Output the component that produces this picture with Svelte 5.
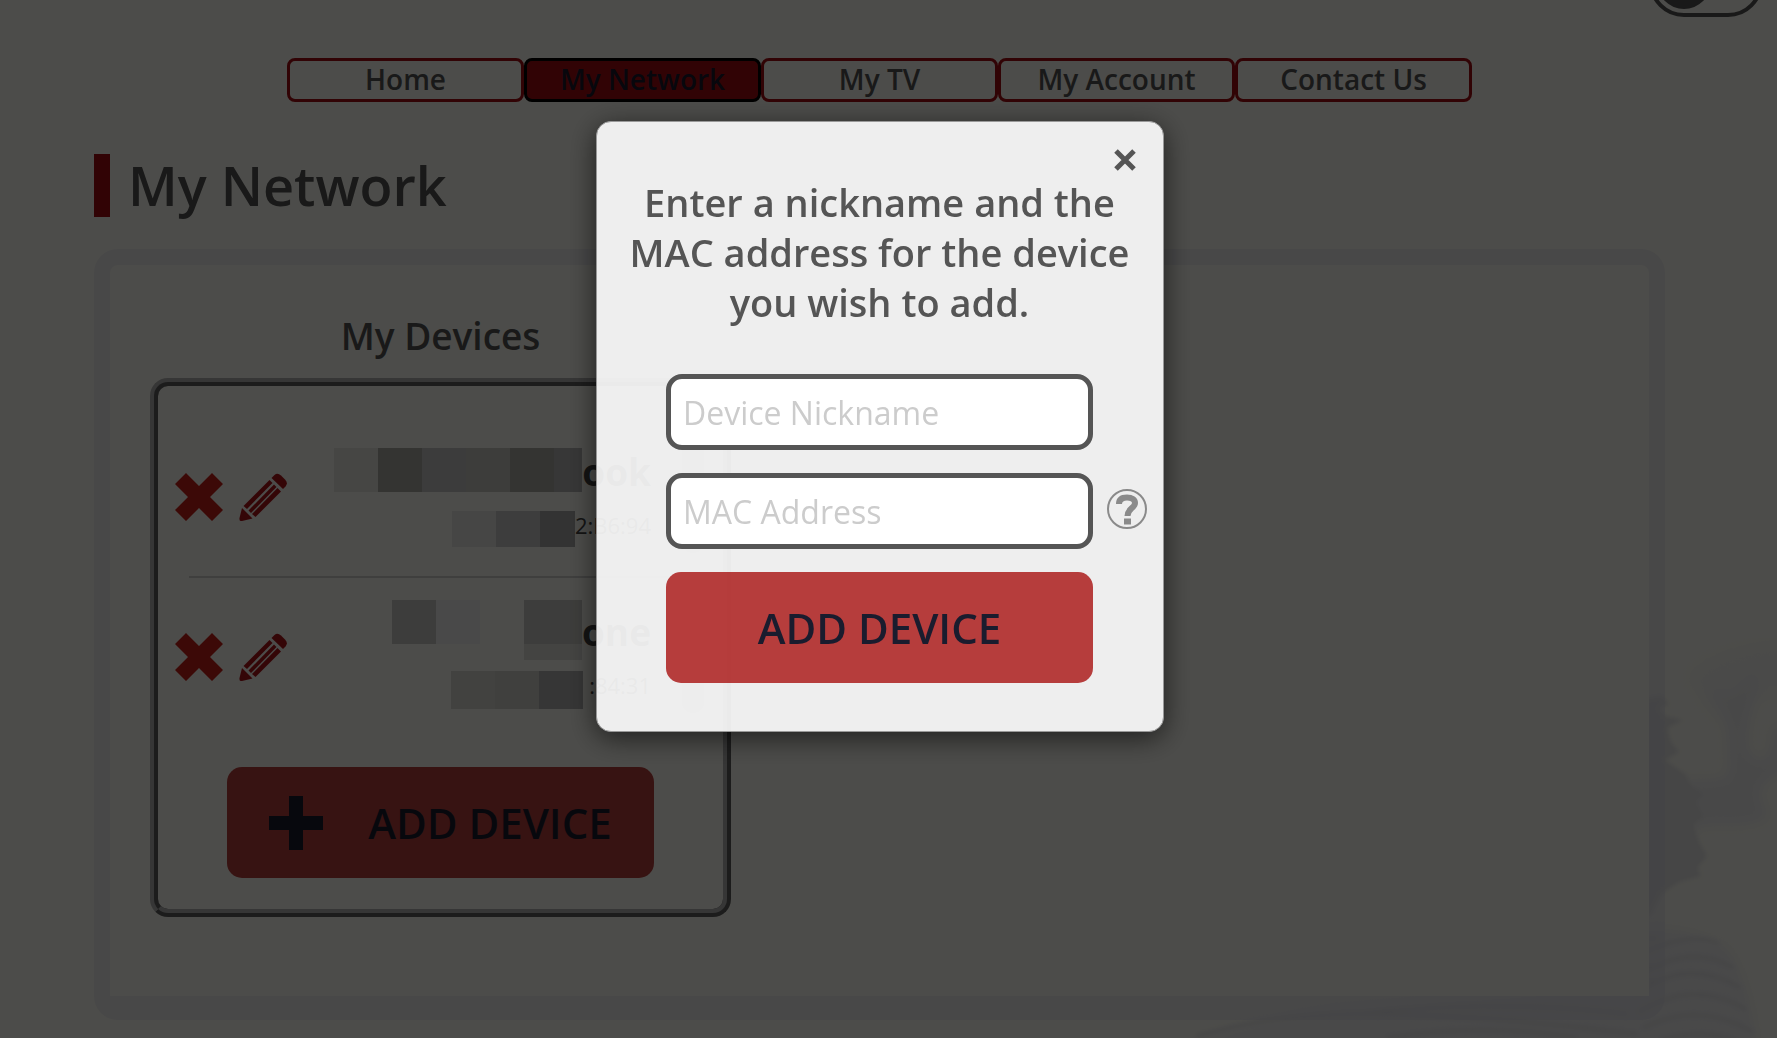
<script>
  const tabs = ['Home', 'My Network', 'My TV', 'My Account', 'Contact Us'];

  const devices = [
    {
      nameTail: 'ook',
      nameGap: 0,
      nameTiles: [
        { w: 44, h: 44, c: '#ecece5' },
        { w: 44, h: 44, c: '#b0b0a9' },
        { w: 44, h: 44, c: '#c8c8c8' },
        { w: 44, h: 44, c: '#cbcbc7' },
        { w: 44, h: 44, c: '#b0b0a9' },
        { w: 28, h: 44, c: '#b8b8b8' }
      ],
      macTail: '2:B6:94',
      macGap: 0,
      macTiles: [
        { w: 44, h: 36, c: '#ecece6' },
        { w: 44, h: 36, c: '#cbcbcb' },
        { w: 35, h: 36, c: '#acacac' }
      ]
    },
    {
      nameTail: 'one',
      nameGap: 0,
      nameTiles: [
        { w: 44, h: 44, c: '#cdcdc8' },
        { w: 44, h: 44, c: '#f3f3f3' },
        { w: 44, h: 44, c: 'transparent' },
        { w: 58, h: 44, c: '#cdcdc8', foot: true }
      ],
      macTail: ':84:31',
      macGap: 6,
      macTiles: [
        { w: 44, h: 38, c: '#dcdcd6' },
        { w: 44, h: 38, c: '#d6d6cf' },
        { w: 44, h: 38, c: '#b4b4b4' }
      ]
    }
  ];

  let nickname = $state('');
  let mac = $state('');
</script>

<div class="page">
  <svg class="scenery" viewBox="0 0 620 400" aria-hidden="true">
    <defs>
      <filter id="haze" x="-20%" y="-20%" width="140%" height="140%">
        <feGaussianBlur stdDeviation="7" />
      </filter>
      <filter id="soft" x="-10%" y="-10%" width="120%" height="120%">
        <feGaussianBlur stdDeviation="2" />
      </filter>
    </defs>
    <g filter="url(#haze)">
      <path fill="#f9f9f4" d="M530 40C545 15 590 5 640 0V60L600 60Q580 110 550 70Z" />
      <path fill="#f1f1f2" d="M550 48L575 58L600 30L598 60Q588 90 590 110Q598 130 612 120L618 85L630 90V130Q600 145 602 155Q606 175 614 178Q590 190 555 186Q520 192 500 210L490 140Q545 145 572 140Q572 90 568 75Z" />
    </g>
    <path filter="url(#soft)" fill="#e9e9e9" d="M480 62l24-4 8 8-10 4 6 8 18 4-16 8 4 14 8 10-14 8 20 14 6 12 12 8-8 8 8 14-10 8 6 18 8 14-10 12 4 8-22 6-18 12-10 20-14 10-30 20V75z" />
    <path filter="url(#haze)" fill="#f3f3f4" d="M20 410Q90 385 180 372L460 350L474 292Q530 286 570 310Q592 340 600 410Z" />
    <g fill="none" stroke="#e6e6e8" stroke-width="3" filter="url(#soft)">
      <path d="M40 398q90-26 200-22t240 20M230 400q100-16 190 0M200 376q140-16 270 0" />
      <path d="M450 300h50M455 328h50M455 343h45" />
      <path d="M484 316q50-24 78-10M482 338q50-34 95-8M480 356q50-38 104-6M482 374q55-34 108-2M486 390q54-28 110 4M500 404q44-16 80 0" />
    </g>
  </svg>

  <header>
    <label class="switch">
      <input type="checkbox" aria-label="Theme" />
    </label>
  </header>

  <nav>
    {#each tabs as tab}
      <a href="#top" class:active={tab === 'My Network'}>{tab}</a>
    {/each}
  </nav>

  <main>
    <h1>My Network</h1>

    <section class="panel">
      <div class="column">
        <h2>My Devices</h2>
        <div class="box">
          <ul>
            {#each devices as d}
              <li>
                <button class="icon" aria-label="Remove device">
                  <svg viewBox="0 0 48 48">
                    <path fill="#c8211a" d="M11 0L24 13L37 0L48 11L35 24L48 37L37 48L24 35L11 48L0 37L13 24L0 11Z" />
                  </svg>
                </button>
                <button class="icon" aria-label="Edit device">
                  <svg viewBox="0 0 48 48" fill="#b0141a">
                    <path d="M32.500 5L35.500 2Q38.500-.5 42 2.500L46 6.500Q49.500 10 46.500 13.500L44 16Z" />
                    <path d="M30.500 7L33.500 10L8 36L4.500 33Z" />
                    <path d="M35 11.500L37.500 14L12 40L9.500 37.500Z" />
                    <path d="M38.500 15L42 18.500L16.500 44L13 41Z" />
                    <path d="M3 35L13.500 45.500L3 48Q0 48.500 .5 45Z" />
                  </svg>
                </button>
                <div class="info">
                  <div class="name">
                    <span class="tiles" style="margin-right:{d.nameGap}px">
                      {#each d.nameTiles as t}
                        <i class:foot={t.foot} style="width:{t.w}px;height:{t.h}px;background:{t.c}"></i>
                      {/each}
                    </span>
                    <span class="tail">{d.nameTail}</span>
                  </div>
                  <div class="mac">
                    <span class="tiles" style="margin-right:{d.macGap}px">
                      {#each d.macTiles as t}
                        <i style="width:{t.w}px;height:{t.h}px;background:{t.c}"></i>
                      {/each}
                    </span>
                    <span>{d.macTail}</span>
                  </div>
                </div>
                <span class="grip"></span>
              </li>
            {/each}
          </ul>
          <button class="primary">
            <svg class="plus" viewBox="0 0 54 54"><path d="M20 0H34V20H54V34H34V54H20V34H0V20H20Z" /></svg>
            ADD DEVICE
          </button>
        </div>
      </div>
    </section>
  </main>
</div>

<div class="overlay">
  <div class="modal" role="dialog" aria-modal="true" aria-labelledby="msg">
    <div class="bar">
      <button class="close" aria-label="Close">
        <svg viewBox="0 0 22 22"><path d="M2 2L20 20M20 2L2 20" stroke="#555" stroke-width="5" /></svg>
      </button>
    </div>
    <p id="msg">Enter a nickname and the MAC address for the device you wish to add.</p>
    <form onsubmit={(e) => e.preventDefault()}>
      <input type="text" aria-label="Device Nickname" placeholder="Device Nickname" bind:value={nickname} />
      <input type="text" aria-label="MAC Address" placeholder="MAC Address" bind:value={mac} />
      <button type="button" class="help" aria-label="Help">
        <svg viewBox="0 0 40 40" fill="none" stroke="#8a8a8a">
          <circle cx="20" cy="20" r="19" stroke-width="2" />
          <path stroke-width="6" d="M12 15C12 10 15.500 8.500 20 8.500C25 8.500 28 10.500 28 14C28 19 20.500 19.500 20.500 27" />
          <path stroke-width="7" d="M20.500 29.500V35.500" />
        </svg>
      </button>
      <button type="submit" class="primary">ADD DEVICE</button>
    </form>
  </div>
</div>

<style>
  :global(body) {
    background: #fffff7;
    overflow: hidden;
  }
  .page,
  .overlay {
    font-family: 'Open Sans', 'Noto Sans', sans-serif;
    color: #555;
    box-sizing: border-box;
  }
  .page {
    position: relative;
    min-height: 100vh;
    overflow: hidden;
  }
  .scenery {
    position: absolute;
    right: 0;
    bottom: 0;
    width: 620px;
    height: 400px;
  }
  h1, h2, p, ul {
    margin: 0;
    padding: 0;
    font-weight: 600;
  }
  button {
    font: inherit;
    color: inherit;
    border: 0;
    padding: 0;
    background: none;
    cursor: pointer;
  }
  button svg {
    display: block;
  }

  header {
    height: 17px;
    margin-bottom: 41px;
    padding-right: 14px;
    display: flex;
    justify-content: flex-end;
    align-items: flex-end;
    overflow: hidden;
  }
  .switch {
    flex: none;
    width: 106px;
    height: 62px;
    border: 4px solid #555;
    border-radius: 35px;
  }
  .switch input {
    appearance: none;
    display: block;
    width: 54px;
    height: 54px;
    margin: 4px;
    border-radius: 50%;
    background: #555;
  }

  nav {
    position: relative;
    display: flex;
    max-width: 1185px;
    margin: 0 auto;
    padding-right: 18px;
  }
  nav a {
    flex: 1;
    box-sizing: border-box;
    height: 44px;
    border: 3px solid #a60d12;
    border-radius: 8px;
    text-align: center;
    line-height: 36px;
    font-size: 28px;
    font-weight: 600;
    color: #555;
    text-decoration: none;
  }
  nav a.active {
    background: #a60d12;
    border-color: #000;
    color: #1a1a2e;
  }

  main {
    position: relative;
    padding: 52px 112px 18px 94px;
  }
  h1 {
    border-left: 16px solid #a60d12;
    padding-left: 18px;
    font-size: 54px;
    line-height: 62px;
    padding-bottom: 1px;
  }
  .panel {
    margin-top: 32px;
    border: 16px solid rgba(225, 225, 235, 0.5);
    border-bottom-width: 24px;
    border-radius: 24px;
    padding: 46px 40px 79px;
    background: #fffff7;
    background-clip: padding-box;
  }
  .column {
    width: 581px;
  }
  h2 {
    text-align: center;
    font-size: 37px;
    line-height: 50px;
    margin-bottom: 17px;
  }
  .box {
    border: 8px ridge #b4b4b4;
    border-radius: 18px;
    padding: 31px 0;
  }
  ul {
    list-style: none;
    margin-bottom: 30px;
  }
  li {
    position: relative;
    display: flex;
    align-items: center;
    gap: 16px;
    height: 160px;
    padding: 0 19px 0 17px;
  }
  li + li::before {
    content: '';
    position: absolute;
    top: -1px;
    left: 31px;
    right: 31px;
    height: 2px;
    background: #d2d2d0;
  }
  .icon,
  .icon svg {
    width: 48px;
    height: 48px;
  }
  .icon {
    padding-bottom: 2px;
  }
  .info {
    flex: 1;
    display: flex;
    flex-direction: column;
    gap: 19px;
    margin-right: 15px;
    padding-top: 1px;
  }
  .name,
  .mac {
    display: flex;
    justify-content: flex-end;
    color: #444;
  }
  .name {
    height: 44px;
    align-items: center;
    font-size: 37px;
    font-weight: 700;
    line-height: 48px;
  }
  .tail {
    padding-top: 4px;
  }
  .mac {
    height: 36px;
    align-items: flex-start;
    font-size: 22px;
    font-weight: 400;
    line-height: 28px;
  }
  .tiles {
    display: flex;
  }
  .tiles i.foot {
    border-bottom: 16px solid #e3e3dd;
    background-clip: padding-box;
  }
  .grip {
    width: 22px;
    height: 112px;
    background: #c0c0c0;
    border-radius: 0 0 10px 10px;
  }

  .primary {
    display: flex;
    align-items: center;
    justify-content: center;
    gap: 45px;
    width: 427px;
    height: 111px;
    margin: 0 auto;
    border-radius: 15px;
    background: rgba(163, 2, 0, 0.75);
    color: #1a1c2e;
    font-size: 42px;
    font-weight: 600;
  }
  .plus {
    width: 54px;
    height: 54px;
    fill: #1a1c2e;
  }

  .overlay {
    position: fixed;
    inset: 0;
    padding: 121px 18px 0 0;
    background: rgba(0, 0, 0, 0.7);
    display: flex;
    justify-content: center;
    align-items: flex-start;
  }
  .modal {
    box-sizing: border-box;
    width: min(568px, 90vw);
    border: 1px solid #999;
    border-radius: 15px;
    padding: 23px 0 48px;
    background: rgba(255, 255, 255, 0.905);
    box-shadow: 0 6px 28px rgba(0, 0, 0, 0.6);
  }
  .bar {
    display: flex;
    justify-content: flex-end;
    padding-right: 23px;
  }
  .close {
    width: 30px;
    height: 30px;
    display: grid;
    place-items: center;
  }
  .close svg {
    width: 22px;
    height: 22px;
  }
  .modal p {
    padding: 2px 24px 0;
    text-align: center;
    font-size: 38px;
    line-height: 50px;
  }
  form {
    display: grid;
    grid-template-columns: 1fr 427px 1fr;
    row-gap: 23px;
    column-gap: 14px;
    align-items: center;
    margin-top: 47px;
  }
  form input {
    grid-column: 2;
    box-sizing: border-box;
    width: 100%;
    height: 76px;
    border: 5px solid #555;
    border-radius: 16px;
    padding: 0 12px;
    background: #fff;
    font: 400 32px 'Open Sans', 'Noto Sans', sans-serif;
    color: #555;
  }
  form input::placeholder {
    color: #ccc;
    opacity: 1;
  }
  .help,
  .help svg {
    width: 40px;
    height: 40px;
  }
  .help {
    margin-bottom: 4px;
  }
  form .primary {
    grid-column: 2;
  }
</style>
